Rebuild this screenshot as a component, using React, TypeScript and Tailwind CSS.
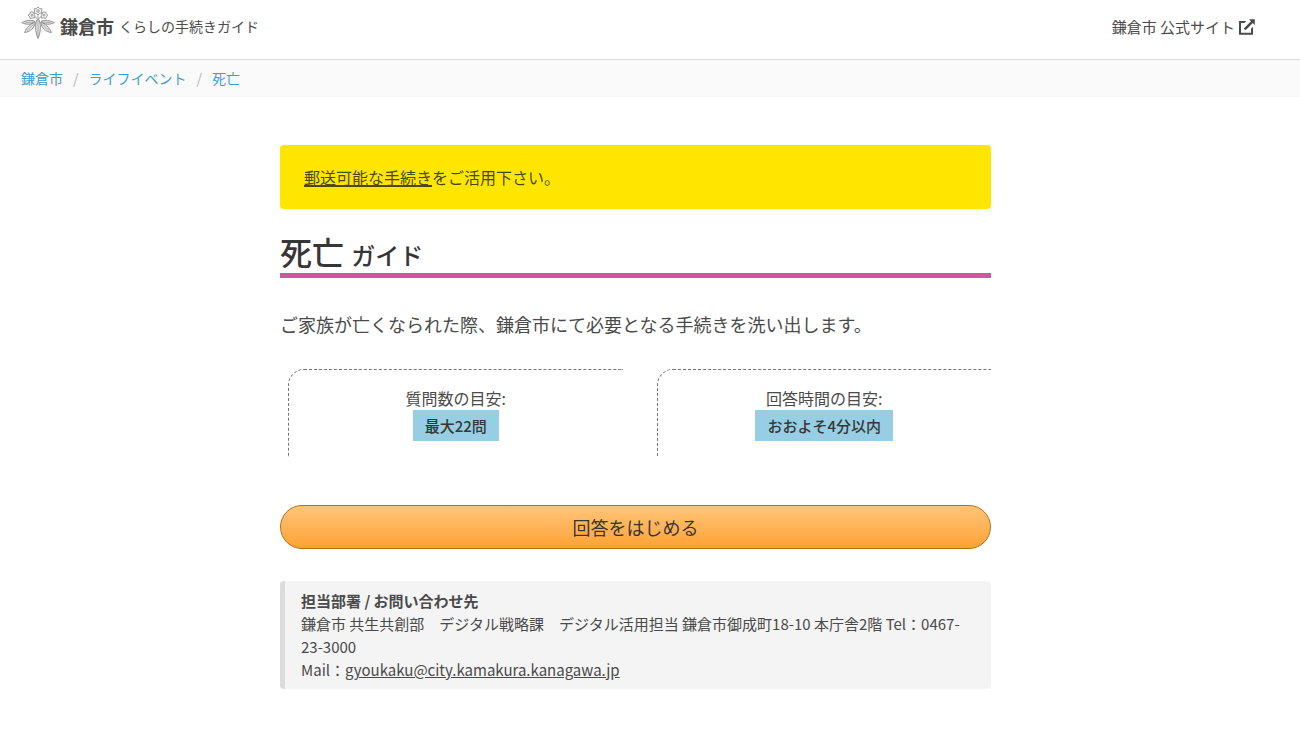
import React from 'react';

const CityEmblem = () => (
  <svg viewBox="0 0 34 34" className="h-[34px] w-[34px]" fill="#e6e6e6" stroke="#858585" strokeWidth="0.9" strokeLinejoin="round" aria-hidden="true">
    <path d="M14 15.5C10 13.5 5 14.5 0.8 16.6C5 18.8 10 19 14 15.5Z" />
    <path d="M20 15.5C24 13.5 29 14.5 33.2 16.6C29 18.8 24 19 20 15.5Z" />
    <path d="M14.3 16.5C9.5 17.5 5.5 21.5 3.6 26.5C9 26 13.5 22 14.3 16.5Z" />
    <path d="M19.7 16.5C24.5 17.5 28.5 21.5 30.4 26.5C25 26 20.5 22 19.7 16.5Z" />
    <path d="M17 12.5C13.6 16 14 26 17 32.5C20 26 20.4 16 17 12.5Z" />
    <path d="M17 14V30M12.5 16L4.5 16.6M21.5 16L29.5 16.6M13 18L6 24.5M21 18L28 24.5" fill="none" strokeWidth="0.6" />
    <g fill="#f4f4f4" strokeWidth="0.8">
      <path d="M17 1L18.6 2.6L21 2.8L20.4 5L21 7.2L18.6 7.4L17 9L15.4 7.4L13 7.2L13.6 5L13 2.8L15.4 2.6Z" />
      <path d="M12 6L9.5 6L8.8 8L7 9.3L8.6 10.7L9.3 12.6L11.4 11.8L13.5 12L13.8 9.8Z" />
      <path d="M22 6L24.5 6L25.2 8L27 9.3L25.4 10.7L24.7 12.6L22.6 11.8L20.5 12L20.2 9.8Z" />
      <circle cx="17" cy="5" r="1.3" />
      <circle cx="11" cy="9.2" r="0.9" />
      <circle cx="23" cy="9.2" r="0.9" />
      <path d="M17 9V12.5M13.8 10.5L16 12.5M20.2 10.5L18 12.5" fill="none" />
    </g>
  </svg>
);

const ExternalIcon = () => (
  <svg viewBox="0 0 16 16" className="h-4 w-4" fill="currentColor" aria-hidden="true">
    <path d="M0 2H7.2L5.4 4H2V13.8H12V9.8L14 7.8V15.8H0Z" />
    <path d="M10 0.2H15.8V6L13.8 4.1L6.6 11.3L4.8 9.5L12 2.2Z" />
  </svg>
);

const App = () => {
  const breadcrumbs = ['鎌倉市', 'ライフイベント', '死亡'];

  const estimates = [
    { label: '質問数の目安:', value: '最大22問' },
    { label: '回答時間の目安:', value: 'おおよそ4分以内' },
  ];

  return (
    <div lang="ja" className="min-h-screen bg-white font-['Noto_Sans_CJK_JP',sans-serif] text-[#4a4a4a]">
      <header className="flex h-[60px] items-start justify-between border-b border-[#dbdbdb] pr-[45px] pl-[21px]">
        <a href="#" className="flex items-center pt-[6px]">
          <CityEmblem />
          <span className="mt-[6px] ml-[5px] text-[18px] leading-[28px] font-bold">鎌倉市</span>
          <span className="mt-[6px] ml-[5px] text-[14px] leading-[28px]">くらしの手続きガイド</span>
        </a>
        <a href="#" className="flex items-center gap-1 pt-[14px] text-[15px] leading-[26px]">
          鎌倉市 公式サイト
          <ExternalIcon />
        </a>
      </header>

      <nav aria-label="パンくず" className="bg-[#fafafa] px-[21px] py-2">
        <ol className="flex text-[14px] leading-[21px]">
          {breadcrumbs.map((name, index) => (
            <li key={name} className="flex">
              {index > 0 && <span className="px-[10px] text-[#b5b5b5]">/</span>}
              <a href="#" className="text-[#3e9fc9]">{name}</a>
            </li>
          ))}
        </ol>
      </nav>

      <div className="pt-12 pr-[29px] pb-10">
        <main className="mx-auto max-w-[711px]">
          <div className="rounded bg-[#ffe600] px-6 py-5 text-[16px] leading-[24px] text-[#4a4a10]">
            <a href="#" className="underline decoration-2">郵送可能な手続き</a>をご活用下さい。
          </div>

          <h1 className="mt-6 border-b-[5px] border-[#d1569b] text-[32px] leading-[36px] font-medium text-[#363636]">
            死亡 <span className="text-[24px]">ガイド</span>
          </h1>

          <p className="mt-8 text-[18px] leading-[28px]">
            ご家族が亡くなられた際、鎌倉市にて必要となる手続きを洗い出します。
          </p>

          <div className="mt-[31px] ml-2 grid grid-cols-2 gap-[34px]">
            {estimates.map((item) => (
              <div key={item.label} className="rounded-tl-2xl border-t border-l border-dashed border-[#777777] py-4 text-center">
                <p className="text-[16px] leading-[24px]">{item.label}</p>
                <strong className="inline-block bg-[#97cee4] px-3 text-[15px] leading-[31px] font-medium text-[#363636]">
                  {item.value}
                </strong>
              </div>
            ))}
          </div>

          <button
            type="button"
            className="mt-12 h-[44px] w-full rounded-full border border-[#b86e14] bg-linear-to-b from-[#ffc478] to-[#ffa22f] text-[18px] text-[#363636]"
          >
            回答をはじめる
          </button>

          <section className="mt-8 rounded border-l-[5px] border-[#dbdbdb] bg-[#f4f4f4] px-4 py-2 text-[15px] leading-[23px]">
            <h2 className="font-bold">担当部署 / お問い合わせ先</h2>
            <p>鎌倉市 共生共創部　デジタル戦略課　デジタル活用担当 鎌倉市御成町18-10 本庁舎2階 Tel：0467-23-3000</p>
            <p>
              Mail：<a href="mailto:gyoukaku@city.kamakura.kanagawa.jp" className="underline">gyoukaku@city.kamakura.kanagawa.jp</a>
            </p>
          </section>
        </main>
      </div>
    </div>
  );
};

export default App;
